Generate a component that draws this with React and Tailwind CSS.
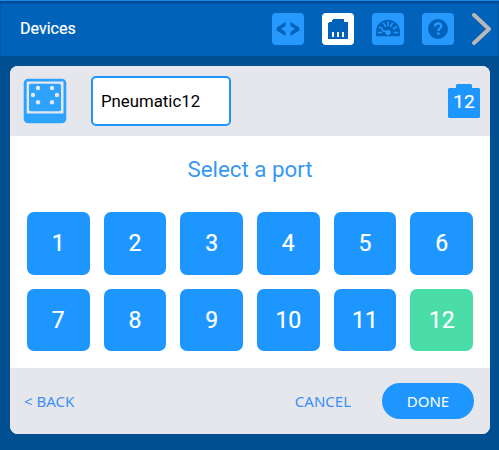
import React, { useState } from 'react';

const PORTS = [1, 2, 3, 4, 5, 6, 7, 8, 9, 10, 11, 12];

const CodeIcon = () => (
  <svg width="32" height="32" viewBox="0 0 32 32" fill="#0062b8">
    <path d="M13.500 9v4.200L8.900 16l4.600 2.800V23L4.700 17.500v-3zM18.500 9v4.200l4.600 2.800-4.600 2.800V23l8.800-5.500v-3z" />
  </svg>
);

const PortIcon = () => (
  <svg width="32" height="32" viewBox="0 0 32 32" shapeRendering="crispEdges">
    <path d="M6 26V10l1-1h3V7l1-1h10l1 1v2h3l1 1v16z" fill="#0062b8" />
    <path d="M10 19h2v5h-2zM15 19h2v5h-2zM20 19h2v5h-2z" fill="#fff" />
  </svg>
);

const GaugeIcon = () => (
  <svg width="32" height="32" viewBox="0 0 32 32">
    <path d="M5 23.300c-.6 0-1-.4-1-1v-3.500a12 12 0 0 1 24 0v3.500c0 .6-.4 1-1 1z" fill="#0062b8" />
    <path
      d="M5.700 19.500h4.600M21.700 19.500h4.600M7 14l4 2M11.300 9.700l2.400 4.300M16 8.500v4.700M20.700 9.700l-2.400 4.300M25 13.500l-4.300 2.700M9.500 17l6 2.300"
      stroke="#2699ff"
      strokeWidth="1.500"
    />
    <circle cx="16" cy="19.600" r="2.600" fill="#2699ff" />
  </svg>
);

const HelpIcon = () => (
  <svg width="32" height="32" viewBox="0 0 32 32">
    <circle cx="16" cy="16" r="10" fill="#0062b8" />
    <path d="M12.900 13.400c0-2 1.300-3 3.200-3s3.200 1.100 3.200 2.700c0 2.300-3.100 2.200-3.100 5" fill="none" stroke="#2699ff" strokeWidth="2.300" />
    <rect x="15" y="19.500" width="2.500" height="2.400" fill="#2699ff" />
  </svg>
);

const PneumaticIcon = () => (
  <svg width="44" height="46" viewBox="0 0 44 46">
    <rect x=".7" y=".7" width="42.600" height="44.600" rx="4.500" fill="#2da2ff" />
    <path d="M3.700 3.500h36.800v32H3.700z" fill="#e6e7ec" />
    <rect x="6" y="5.800" width="32" height="27.400" rx="2" fill="#2da2ff" />
    <g fill="#e6e7ec">
      <circle cx="15" cy="10" r="2.200" />
      <circle cx="29" cy="10" r="2.200" />
      <circle cx="10" cy="17" r="2.200" />
      <circle cx="34" cy="17" r="2.200" />
      <circle cx="15" cy="24.200" r="2.200" />
      <circle cx="29" cy="24.200" r="2.200" />
    </g>
  </svg>
);

const TABS = [
  { id: 'code', label: 'Code', Icon: CodeIcon },
  { id: 'devices', label: 'Devices', Icon: PortIcon },
  { id: 'monitor', label: 'Monitor', Icon: GaugeIcon },
  { id: 'help', label: 'Help', Icon: HelpIcon },
];

export default function App() {
  const [tab, setTab] = useState('devices');
  const [name, setName] = useState('Pneumatic12');
  const [port, setPort] = useState(12);

  return (
    <div className="w-[499px] h-[450px] flex flex-col overflow-hidden bg-[#004f91] font-['Roboto',sans-serif]">
      <header className="h-14 shrink-0 flex items-center justify-between pl-5 pr-2 pt-px bg-[#0062b8] border-t border-[#1e88e5] shadow-[inset_0_2px_2px_rgba(0,40,90,0.45)]">
        <h1 className="text-base text-white [-webkit-text-stroke:0.2px_white]">Devices</h1>
        <div className="flex items-center gap-[18px]">
          {TABS.map(({ id, label, Icon }) => (
            <button
              key={id}
              aria-label={label}
              onClick={() => setTab(id)}
              className={`size-8 rounded-[4px] ${tab === id ? 'bg-white' : 'bg-[#2699ff]'}`}
            >
              <Icon />
            </button>
          ))}
          <button aria-label="Collapse">
            <svg width="19" height="32" viewBox="0 0 19 32" fill="none" stroke="#b8b8b8" strokeWidth="4" strokeLinecap="round" strokeLinejoin="round">
              <path d="M2 2l15 14L2 30" />
            </svg>
          </button>
        </div>
      </header>

      <main className="w-[480px] h-[368px] mx-2.5 mt-2.5 flex flex-col rounded-lg overflow-hidden bg-white">
        <div className="h-[70px] flex items-center pl-[13px] pr-2.5 bg-[#e6e7ec]">
          <PneumaticIcon />
          <input
            value={name}
            onChange={(e) => setName(e.target.value)}
            className="ml-6 w-[140px] h-[50px] px-2 rounded-[5px] border-2 border-[#1e96ff] bg-white text-[16.800px] text-black outline-none"
          />
          <div className="ml-auto grid place-items-center w-8 h-[34px]">
            <svg className="col-start-1 row-start-1" width="32" height="34" viewBox="0 0 32 34">
              <path d="M0 33V5l1-1h7V1l1-1h14l1 1v3h7l1 1v28l-1 1H1z" fill="#1e96ff" />
            </svg>
            <span className="col-start-1 row-start-1 text-[19px] leading-none text-white [-webkit-text-stroke:0.2px_white]">{port}</span>
          </div>
        </div>

        <div className="h-[232px] px-[17px] pt-[17px]">
          <h2 className="h-[59px] text-center text-[22.300px] leading-[33px] text-[#3898f0]">Select a port</h2>
          <div className="grid grid-cols-6 gap-3.5">
            {PORTS.map((p) => (
              <button
                key={p}
                onClick={() => setPort(p)}
                className={`aspect-square pt-0.5 rounded-[7px] text-[23px] text-white [-webkit-text-stroke:0.2px_white] ${p === port ? 'bg-[#4adda8]' : 'bg-[#1e96ff]'}`}
              >
                {p}
              </button>
            ))}
          </div>
        </div>

        <footer className="h-[66px] flex items-center pl-3.5 pr-4 bg-[#e6e7ec] font-['Noto_Sans',sans-serif] text-[15px] text-[#3b8ff5]">
          <button>&lt; BACK</button>
          <button className="ml-auto">CANCEL</button>
          <button className="ml-[31px] w-[92px] h-9 rounded-full bg-[#1e96ff] text-white">DONE</button>
        </footer>
      </main>
    </div>
  );
}
